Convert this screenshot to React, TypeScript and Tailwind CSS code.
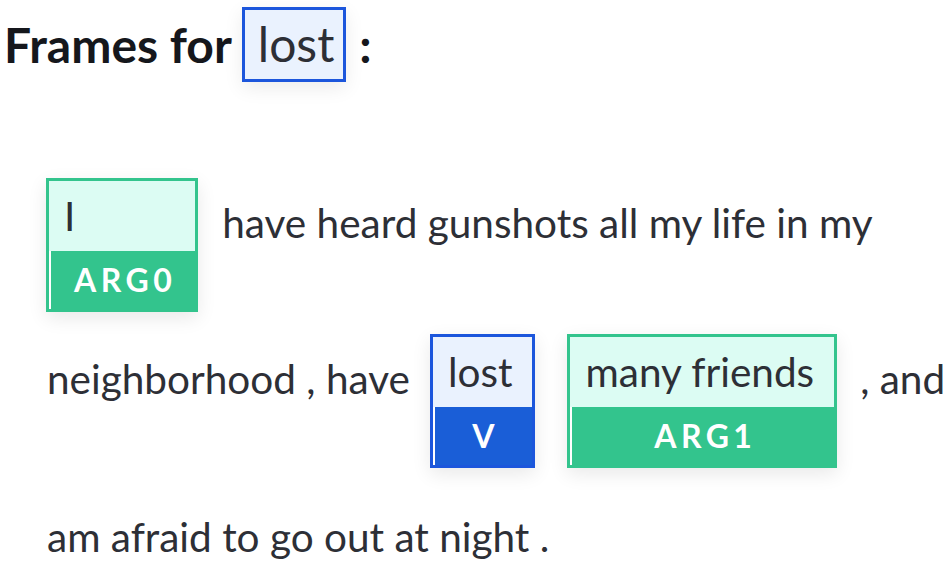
const lato = { fontFamily: "Lato, 'Noto Sans', sans-serif" }

type Frame = { word: string; label: string; kind: "arg" | "verb" }

function FrameBox({ word, label, kind }: Frame) {
  const verb = kind === "verb"
  return (
    <div
      className={`flex flex-col border-[3px] shadow-[0_6px_18px_rgba(0,0,0,0.09)] ${
        verb ? "border-[#1c56dc]" : "border-[#33c48d]"
      }`}
    >
      <div
        className={`h-[70px] pl-[15px] pr-[20px] pt-[11px] text-[40.5px] leading-[48px] text-[#2d2f36] ${
          verb ? "bg-[#eaf2fe]" : "bg-[#dcfcf3]"
        }`}
      >
        {word}
      </div>
      <div
        className={`h-[58px] flex items-center justify-center pl-[23px] pr-[19px] border-l-2 border-white text-[32px] font-bold tracking-[0.14em] text-white ${
          verb ? "bg-[#1a5ed7]" : "bg-[#33c48d]"
        }`}
      >
        {label}
      </div>
    </div>
  )
}

export default function App() {
  return (
    <div className="w-[952px] h-[563px] bg-white overflow-hidden text-[#2d2f36]" style={lato}>
      {/* Heading */}
      <div className="flex items-center pl-[4px] pt-[7px]">
        <span className="text-[48px] font-bold text-[#15171c] leading-none">Frames for</span>
        <span className="ml-[10px] border-[3px] border-[#1c56dc] bg-[#eaf2fe] h-[75px] pl-[13px] pr-[9px] pt-[8px] text-[48px] leading-[52px] text-[#2d2f36] shadow-[0_6px_18px_rgba(0,0,0,0.08)]">
          lost
        </span>
        <span className="ml-[13px] text-[48px] font-bold text-[#15171c] leading-none">:</span>
      </div>

      <div className="pl-[46px] pt-[96px] text-[40.5px] leading-[48px]">
        {/* Row 1 */}
        <div className="flex items-start">
          <FrameBox word="I" label="ARG0" kind="arg" />
          <span className="ml-[24px] mt-[21px]">have heard gunshots all my life in my</span>
        </div>

        {/* Row 2 */}
        <div className="flex items-start mt-[22px]">
          <span className="ml-[1px] mt-[21px]">neighborhood , have</span>
          <div className="ml-[20px]">
            <FrameBox word="lost" label="V" kind="verb" />
          </div>
          <div className="ml-[32px]">
            <FrameBox word="many friends" label="ARG1" kind="arg" />
          </div>
          <span className="ml-[23px] mt-[21px] whitespace-nowrap">, and</span>
        </div>

        {/* Row 3 */}
        <div className="ml-[1px] mt-[45px]">am afraid to go out at night .</div>
      </div>
    </div>
  )
}
